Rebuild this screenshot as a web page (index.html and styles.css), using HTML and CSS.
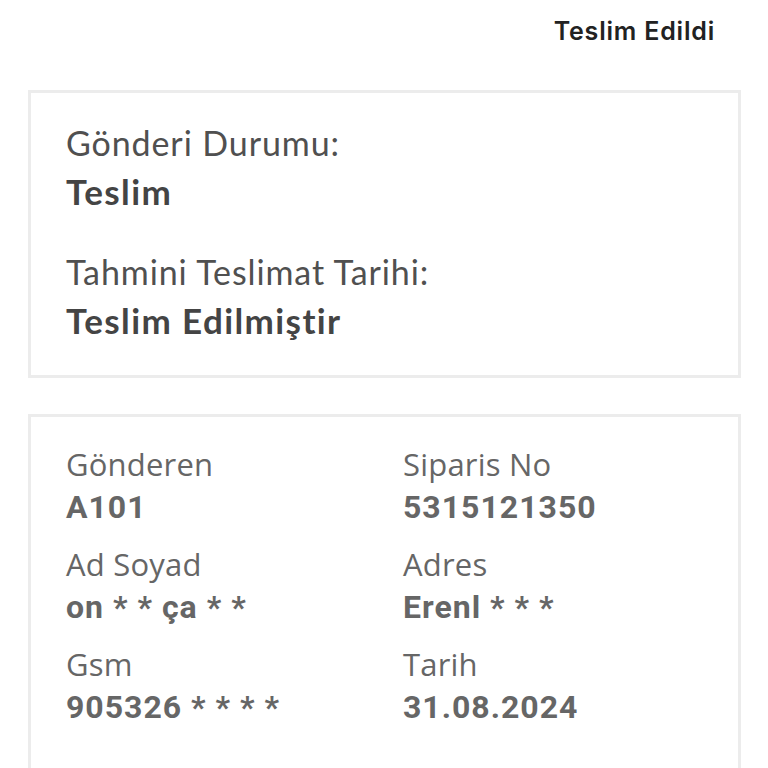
FILE: index.html
```html
<!DOCTYPE html>
<html lang="tr">
<head>
<meta charset="utf-8">
<link rel="stylesheet" href="styles.css">
</head>
<body>
<div class="page">
  <div class="topbar"><span class="status">Teslim Edildi</span></div>
  <section class="card card-status">
    <div class="st-label">Gönderi Durumu:</div>
    <div class="st-value">Teslim</div>
    <div class="st-label st-second">Tahmini Teslimat Tarihi:</div>
    <div class="st-value">Teslim Edilmiştir</div>
  </section>
  <section class="card card-info">
    <div class="grid">
      <div class="item"><div class="lbl">Gönderen</div><div class="val">A101</div></div>
      <div class="item"><div class="lbl">Siparis No</div><div class="val">5315121350</div></div>
      <div class="item"><div class="lbl">Ad Soyad</div><div class="val">on * * ça * *</div></div>
      <div class="item"><div class="lbl">Adres</div><div class="val">Erenl * * *</div></div>
      <div class="item"><div class="lbl">Gsm</div><div class="val">905326 * * * *</div></div>
      <div class="item"><div class="lbl">Tarih</div><div class="val">31.08.2024</div></div>
    </div>
  </section>
</div>
</body>
</html>
```
FILE: styles.css
```css
* { box-sizing: border-box; }
html, body { margin: 0; padding: 0; background: #fff; overflow: hidden; }
.page { width: 768px; height: 768px; padding: 0 27px 0 28px; overflow: hidden; }
.topbar { display: flex; justify-content: flex-end; height: 90px; padding: 16px 26px 0 0; }
.status { font-family: "Inter", "Open Sans", sans-serif; font-weight: 600; font-size: 25px; color: #222; letter-spacing: 0.8px; }
.card { border: 3px solid #ececec; background: #fff; }
.card-status { height: 288px; padding: 26px 35px 0 35px; font-family: "Lato", sans-serif; }
.st-label { font-size: 34px; color: #505050; line-height: 48px; font-weight: 400; letter-spacing: 0.9px; }
.st-value { font-size: 35px; color: #444; line-height: 48px; font-weight: 700; letter-spacing: 1.4px; }
.st-second { margin-top: 33px; }
.card-info { margin-top: 36px; height: 400px; border-bottom: none; padding: 26px 35px 0 35px; }
.grid { display: grid; grid-template-columns: 337px 1fr; row-gap: 13px; }
.lbl { font-family: "Open Sans", sans-serif; font-size: 31px; color: #666; line-height: 42px; font-weight: 400; letter-spacing: 0.2px; }
.val { font-family: "Roboto", sans-serif; font-size: 32px; color: #666; line-height: 45px; font-weight: 700; letter-spacing: 1px; }
```
